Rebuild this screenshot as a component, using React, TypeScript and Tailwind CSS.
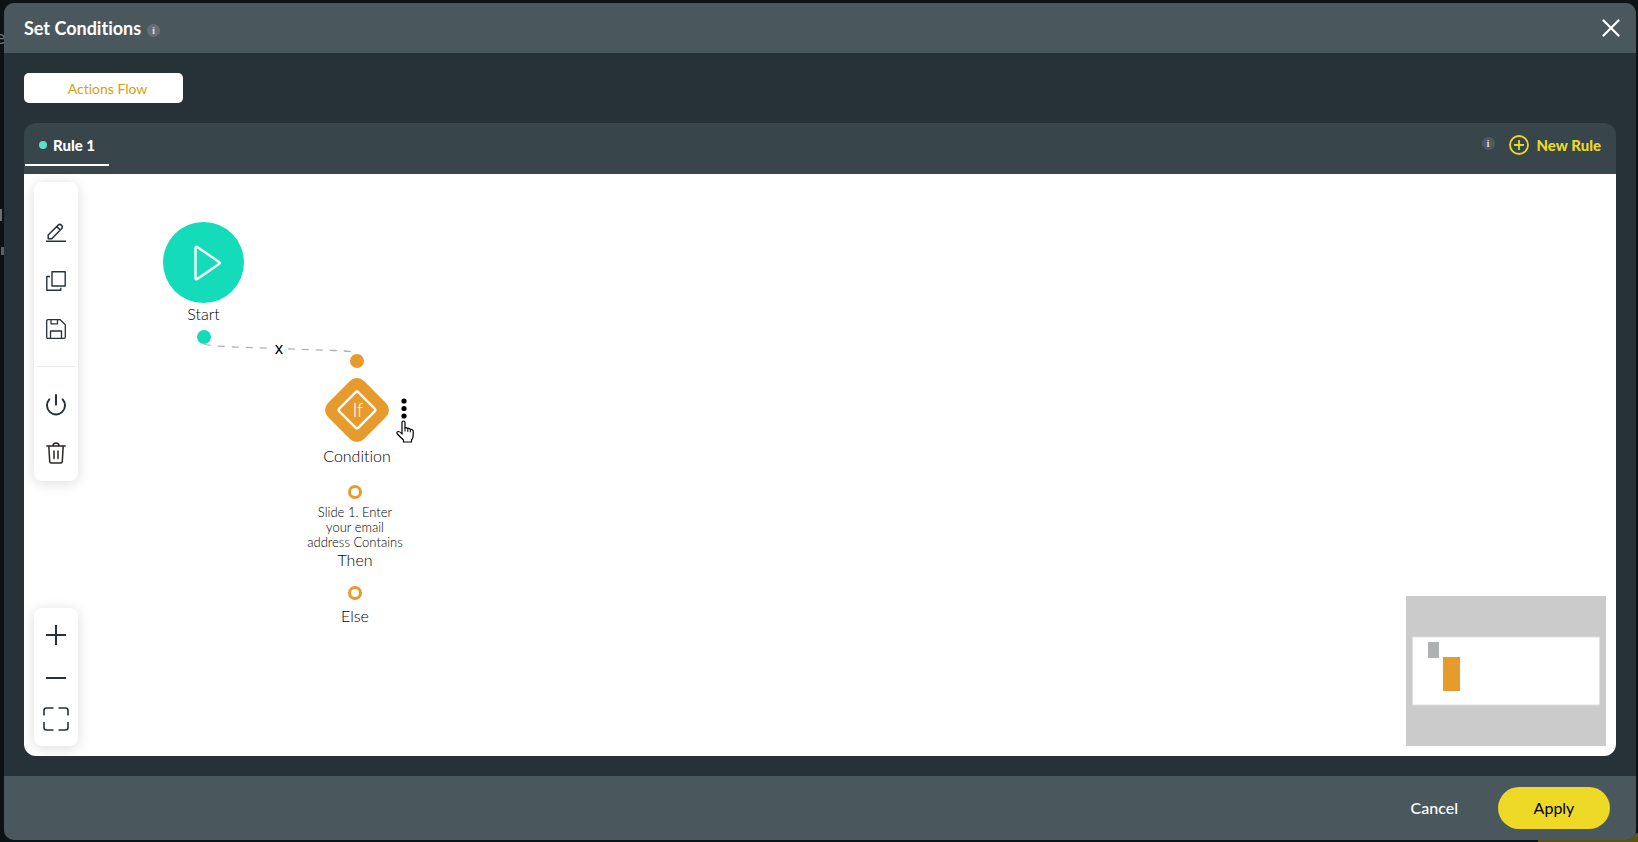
import React from 'react';
import { clsx } from 'clsx';

const InfoBadge = ({ className }: { className?: string }) => (
  <span
    className={clsx(
      "flex size-[13px] shrink-0 items-center justify-center rounded-full font-['Liberation_Serif',serif] text-[11px] font-bold leading-none text-[#d5d8da]",
      className
    )}
  >
    i
  </span>
);

interface ToolButtonProps {
  label: string;
  className?: string;
  children: React.ReactNode;
}

const ToolButton: React.FC<ToolButtonProps> = ({ label, className, children }) => (
  <button
    type="button"
    aria-label={label}
    className={clsx('flex w-11 items-center justify-center text-[#263238]', className ?? 'h-12')}
  >
    {children}
  </button>
);

const EditTools = () => (
  <div className="flex flex-col rounded-lg bg-white pt-[27px] pb-1 shadow-[0_2px_14px_rgba(0,0,0,0.14)]">
    <ToolButton label="Edit">
      <svg width="20" height="20" viewBox="0 0 20 20" fill="none" stroke="currentColor" strokeWidth="1.5" strokeLinejoin="round">
        <path d="M2.2 15.800V12L12 2.200q1.800-1.700 3.500 0t0 3.500L5.800 15.800zM10.800 3.600l3.400 3.400" />
        <path d="M0 18.300h20" />
      </svg>
    </ToolButton>
    <ToolButton label="Duplicate">
      <svg width="20" height="20" viewBox="0 0 20 20" fill="none" stroke="currentColor" strokeWidth="1.4" strokeLinejoin="round">
        <path d="M6 .8h13.2V15H6z" />
        <path d="M4 5.5H.8v13.7h14V16.8" />
      </svg>
    </ToolButton>
    <ToolButton label="Save">
      <svg width="20" height="20" viewBox="0 0 20 20" fill="none" stroke="currentColor" strokeWidth="1.3" strokeLinejoin="round">
        <path d="M2 .7h12.2l5.1 5.1V18q0 1.300-1.300 1.300H2Q.7 19.300.7 18V2Q.7.7 2 .7z" />
        <path d="M5 .8v4h6.500v-4M4.500 19.200v-7.200h11v7.200" />
      </svg>
    </ToolButton>
    <div className="mx-[3px] mt-[13px] mb-[14px] h-px bg-[#ececec]" />
    <ToolButton label="Enable">
      <svg width="22" height="22" viewBox="0 0 22 22" fill="none" stroke="currentColor" strokeWidth="2" strokeLinecap="round">
        <path d="M11 1v9.500M4.300 5.400A9 9 0 1 0 17.700 5.400" />
      </svg>
    </ToolButton>
    <ToolButton label="Delete">
      <svg width="20" height="22" viewBox="0 0 20 22" fill="none" stroke="#2b2424" strokeWidth="1.500" strokeLinecap="round" strokeLinejoin="round">
        <path d="M.8 4h18.400M7 4q0-3 3-3t3 3M2.800 4l.9 15.500q.1 1.500 1.600 1.500h9.400q1.500 0 1.600-1.500L17.200 4M8 9v7.500M12 9v7.500" />
      </svg>
    </ToolButton>
  </div>
);

const ZoomTools = () => (
  <div className="flex flex-col rounded-lg bg-white pt-[5px] pb-[7px] shadow-[0_2px_14px_rgba(0,0,0,0.14)]">
    <ToolButton label="Zoom in" className="h-11">
      <svg width="20" height="20" viewBox="0 0 20 20" stroke="currentColor" strokeWidth="2">
        <path d="M0 10h20M10 0v20" />
      </svg>
    </ToolButton>
    <ToolButton label="Zoom out" className="h-[42px]">
      <svg width="20" height="20" viewBox="0 0 20 20" stroke="currentColor" strokeWidth="2">
        <path d="M0 10h20" />
      </svg>
    </ToolButton>
    <ToolButton label="Fit to screen" className="h-10">
      <svg width="26" height="24" viewBox="0 0 26 24" fill="none" stroke="currentColor" strokeWidth="1.600">
        <path d="M1 8.500V3.500Q1 1 3.500 1h7M15.500 1h7Q25 1 25 3.500v5M25 15v5.500q0 2.500-2.500 2.500h-7M10.500 23h-7Q1 23 1 20.500V15" />
      </svg>
    </ToolButton>
  </div>
);

const Edge = () => (
  <>
    <svg className="absolute left-0 top-0 h-[200px] w-[400px]" fill="none" stroke="#b0b0b0" strokeWidth="1.300">
      <path d="M180 170C184 172 196 172 210 173L310 176.500C325 177 330 178 333 179" strokeDasharray="7 7" />
    </svg>
    <button
      type="button"
      aria-label="Remove connection"
      className="absolute left-[246px] top-[164px] h-5 w-[18px] bg-white font-['Noto_Sans',sans-serif] text-base leading-5 text-black"
    >
      x
    </button>
  </>
);

const StartNode = () => (
  <div className="absolute left-[139px] top-12 flex w-[81px] flex-col items-center">
    <div className="flex size-[81px] items-center justify-center rounded-full bg-[#14dcba]">
      <svg className="ml-2" width="27" height="36" viewBox="0 0 27 36" fill="none" stroke="#fff" strokeWidth="2.400" strokeLinejoin="round">
        <path d="M1.500 3.200q0-2.500 2.100-1L25 17q1.400 1 0 2L3.600 33.800q-2.100 1.500-2.100-1z" />
      </svg>
    </div>
    <span className="text-base font-light leading-[22px]">Start</span>
    <span className="mt-[5px] size-[14px] rounded-full bg-[#14dcba]" />
  </div>
);

const Output = ({ rule, label }: { rule?: string; label: string }) => (
  <div className="flex flex-col items-center pr-1">
    <span className="size-[14px] rounded-full border-3 border-[#e89b2d]" />
    {rule && <p className="mt-[6px] w-24 text-center text-[13px] font-light leading-[15px]">{rule}</p>}
    <span className={clsx('text-base font-light leading-5', !rule && 'mt-[6px]')}>{label}</span>
  </div>
);

const ConditionNode = () => (
  <div className="absolute left-[280px] top-[180px] flex w-[106px] flex-col items-center">
    <span className="size-[14px] rounded-full bg-[#e89b2d]" />
    <svg className="mt-[10px]" width="64" height="64" viewBox="0 0 64 64">
      <rect x="6.500" y="6.500" width="51" height="51" rx="10" fill="#e89b2d" transform="rotate(45 32 32)" />
      <rect x="18.500" y="18.500" width="27" height="27" rx="2" fill="none" stroke="#fff" strokeWidth="2.400" transform="rotate(45 32 32)" />
      <text x="33" y="39" textAnchor="middle" fill="#fff" fontSize="19" fontWeight="300">
        If
      </text>
    </svg>
    <span className="mt-1 text-base font-light leading-5">Condition</span>
    <div className="mt-[19px]">
      <Output rule="Slide 1. Enter your email address Contains" label="Then" />
    </div>
    <div className="mt-4">
      <Output label="Else" />
    </div>

    <button type="button" aria-label="Condition menu" className="absolute left-[92px] top-[43px] px-1">
      <svg width="8" height="24" viewBox="0 0 8 24" fill="#000">
        <circle cx="4" cy="4" r="2.600" />
        <circle cx="4" cy="11.500" r="2.600" />
        <circle cx="4" cy="19" r="2.600" />
      </svg>
    </button>
    <svg
      className="absolute left-[92px] top-[66px]"
      width="18"
      height="23"
      viewBox="0 0 18 23"
      fill="#fff"
      stroke="#000"
      strokeWidth="1.200"
      strokeLinejoin="round"
    >
      <path d="M6 13V2.500Q6 1 7.500 1T9 2.500V8q1-1 2.800.5 1.500-.7 2.500.8 2.700-.3 2.900 2.200v4q0 2.500-1.700 4.500v2H7.500v-2Q4 17 1 13.500.5 11.500 2.500 11.500 4 11.500 6 14z" />
      <path d="M9 8v3.500M11.800 8.500V12M14.300 9.300v3" fill="none" strokeWidth="1" />
    </svg>
  </div>
);

const MiniMap = () => (
  <svg className="shrink-0 bg-[#cbcbcb]" width="200" height="150" viewBox="0 0 200 150" role="img" aria-label="Flow overview">
    <rect x="6.500" y="41" width="187" height="68" fill="#fff" stroke="#dedede" />
    <rect x="22" y="46" width="11" height="16" fill="#adb1b1" />
    <rect x="37" y="61" width="17" height="34" fill="#e89b2d" />
  </svg>
);

// Slivers of the editor page that show round the dialog
const Backdrop = () => (
  <div className="absolute inset-0 overflow-hidden text-[#6b7072]">
    <span className="absolute -left-[5px] top-6 text-xl leading-6">e</span>
    <span className="absolute left-0 top-[209px] h-3 w-[2px] bg-[#6b7072]" />
    <span className="absolute left-px top-[247px] h-2 w-[3px] bg-[#5a6062]" />
    <span className="absolute bottom-0 right-0 h-[9px] w-[100px] bg-[#5d5110]" />
  </div>
);

export default function App() {
  return (
    <div className="relative h-screen bg-[#0d1214] pt-[3px] pr-[2px] pb-[2px] pl-1 font-['Lato',sans-serif] text-black [font-variant-ligatures:none]">
      <Backdrop />
      <div
        role="dialog"
        aria-labelledby="dialog-title"
        className="relative flex h-full flex-col overflow-hidden rounded-[10px] bg-[#273238]"
      >
        <header className="flex h-[50px] shrink-0 items-center bg-[#4a585e] pr-4 pl-5 text-white">
          <h1 id="dialog-title" className="text-lg font-bold leading-6">Set Conditions</h1>
          <InfoBadge className="mt-1 ml-[6px] bg-[#666f78]" />
          <button type="button" aria-label="Close" className="ml-auto">
            <svg width="18" height="18" viewBox="0 0 18 18" stroke="currentColor" strokeWidth="2.200" strokeLinecap="round">
              <path d="m1.500 1.500 15 15M16.500 1.500l-15 15" />
            </svg>
          </button>
        </header>

        <main className="flex min-h-0 flex-1 flex-col p-5">
          <button type="button" className="h-[30px] w-[159px] shrink-0 rounded-[5px] bg-white pt-[2px] pl-2 text-sm text-[#d2a210]">
            Actions Flow
          </button>

          <section className="mt-5 flex min-h-0 flex-1 flex-col overflow-hidden rounded-xl bg-[#38454b]">
            <div className="flex h-[51px] shrink-0 items-start pr-[15px] pl-px">
              <button
                type="button"
                className="flex h-[43px] items-center gap-[6px] border-b-2 border-white pt-[3px] pr-[14px] pl-[14px] text-[15px] font-black text-white"
              >
                <span className="size-2 rounded-full bg-[#5ce0c8]" />
                Rule 1
              </button>
              <div className="ml-auto flex h-11 items-center">
                <InfoBadge className="mb-1 bg-[#4c5a63]" />
                <button type="button" className="ml-[14px] flex items-center gap-2 text-[15px] font-black text-[#ead827]">
                  <svg width="20" height="20" viewBox="0 0 20 20" fill="none" stroke="currentColor" strokeWidth="1.800">
                    <circle cx="10" cy="10" r="9" />
                    <path d="M5 10h10M10 5v10" />
                  </svg>
                  New Rule
                </button>
              </div>
            </div>

            <div className="relative flex min-h-0 flex-1 items-end justify-between bg-white px-[10px] pt-2 pb-[10px]">
              <Edge />
              <StartNode />
              <ConditionNode />
              <div className="flex h-full flex-col justify-between">
                <EditTools />
                <ZoomTools />
              </div>
              <MiniMap />
            </div>
          </section>
        </main>

        <footer className="flex h-16 shrink-0 items-center justify-end gap-10 bg-[#4a585e] pr-[26px]">
          <button type="button" className="text-base font-medium text-white">Cancel</button>
          <button type="button" className="h-[42px] w-28 rounded-full bg-[#eed926] text-base text-black">
            Apply
          </button>
        </footer>
      </div>
    </div>
  );
}
